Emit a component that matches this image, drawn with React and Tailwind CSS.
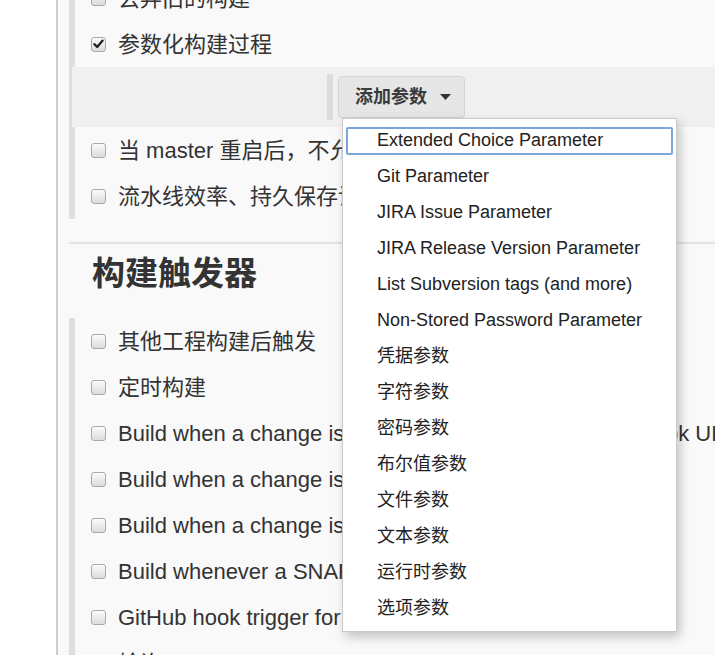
import React from "react";

const FONT = { fontFamily: '"Liberation Sans", Arial, "Noto Sans CJK SC", sans-serif' };

const paramTypes = [
  "Extended Choice Parameter",
  "Git Parameter",
  "JIRA Issue Parameter",
  "JIRA Release Version Parameter",
  "List Subversion tags (and more)",
  "Non-Stored Password Parameter",
  "凭据参数",
  "字符参数",
  "密码参数",
  "布尔值参数",
  "文件参数",
  "文本参数",
  "运行时参数",
  "选项参数",
];

const triggers = [
  "其他工程构建后触发",
  "定时构建",
  "Build when a change is pushed to GitLab. GitLab webhook URL: http://jenkins/project/demo",
  "Build when a change is pushed to BitBucket",
  "Build when a change is pushed to Gogs",
  "Build whenever a SNAPSHOT dependency is built",
  "GitHub hook trigger for GITScm polling",
  "轮询 SCM",
];

function Checkbox({ checked }) {
  return (
    <span className="relative flex h-[15px] w-[15px] shrink-0 items-center justify-center rounded-[3px] border border-[#a9a9a9] bg-gradient-to-b from-[#fbfbfb] to-[#dcdcdc]">
      {checked && (
        <svg width="11" height="10" viewBox="0 0 11 10">
          <path d="M1.5 5.2 L4.2 8 L9.6 1.6" fill="none" stroke="#222" strokeWidth="2.3" strokeLinecap="round" strokeLinejoin="round" />
        </svg>
      )}
    </span>
  );
}

function Row({ label, checked }) {
  return (
    <div className="flex h-[46px] items-center gap-[12px] whitespace-nowrap pl-[16px] text-[22px] text-[#333]">
      <Checkbox checked={checked} />
      <span>{label}</span>
    </div>
  );
}

export default function App() {
  return (
    <div className="relative flex h-[655px] w-[715px] overflow-hidden bg-white" style={FONT}>
      <div className="w-[56px] shrink-0 bg-white" />
      <div className="flex-1 border-l-2 border-[#cdcdcd] bg-[#f9f9f9] pl-[11px]">
        <div className="-mt-[25px]">
          {/* general section (scrolled) */}
          <div className="border-l-[6px] border-[#dedede]">
            <Row label="丢弃旧的构建" />
            <Row label="参数化构建过程" checked />
            <div className="-ml-[3px] flex h-[60px] items-center bg-[#f0f0f0] pl-[255px]">
              <div className="h-[46px] w-[6px] bg-[#dcdcdc]" />
              <button className="ml-[5px] flex h-[42px] w-[127px] items-center rounded-[4px] border border-[#d3d3d3] bg-[#e6e6e6] pl-[16px] text-[18px] font-bold text-[#3a3a3a]">
                添加参数
                <svg className="ml-[13px]" width="11" height="6" viewBox="0 0 11 6">
                  <path d="M0 0 H11 L5.5 6 Z" fill="#333" />
                </svg>
              </button>
            </div>
            <Row label="当 master 重启后，不允许恢复流水线" />
            <Row label="流水线效率、持久保存设置覆盖" />
          </div>

          <div className="mt-[23px] border-t-2 border-[#e2e2e2]" />
          <h2 className="h-[74px] pl-[23px] pt-[10px] text-[33px] font-bold leading-[40px] text-[#333]">构建触发器</h2>

          <div className="border-l-[6px] border-[#dedede]">
            {triggers.map((t) => (
              <Row key={t} label={t} />
            ))}
          </div>
        </div>
      </div>

      {/* add parameter dropdown */}
      <div className="absolute left-[342px] top-[118px] w-[335px] border border-[#c9c9c9] bg-white pb-[5px] pt-[3px] shadow-[3px_5px_10px_rgba(0,0,0,0.22)]">
        {paramTypes.map((p, i) => (
          <div key={p} className="relative flex h-[36px] items-center whitespace-nowrap pl-[34px] text-[18px] text-[#222]">
            {i === 0 && (
              <span className="absolute bottom-[3px] left-[3px] right-[3px] top-[5px] rounded-[2px] border-2 border-[#7ba6de]" />
            )}
            <span className="relative">{p}</span>
          </div>
        ))}
      </div>
    </div>
  );
}
